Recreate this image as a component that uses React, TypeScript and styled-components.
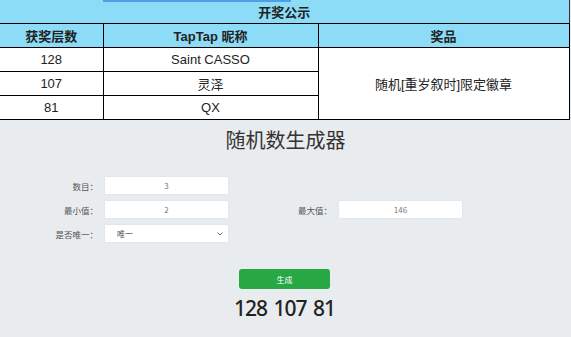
import React from "react";
import styled, { createGlobalStyle } from "styled-components";

const GlobalStyle = createGlobalStyle`
  html, body {
    margin: 0;
    padding: 0;
    background: #e9ecef;
    font-family: "Liberation Sans", "Noto Sans CJK SC", sans-serif;
  }
`;

const Page = styled.div`
  width: 571px;
  height: 337px;
  overflow: hidden;
  background: #e9ecef;
`;

const Table = styled.table`
  border-collapse: collapse;
  width: 569px;
  background: #fff;
  font-size: 13px;
  color: #222;
  table-layout: fixed;
`;

const Col = styled.col<{ $w: number }>`
  width: ${(p) => p.$w}px;
`;

const TitleCell = styled.th`
  position: relative;
  height: 23px;
  padding: 0;
  background: #8cdcf8;
  border-right: 1px solid #333;
  border-bottom: 1px solid #000;
  font-size: 13px;
  font-weight: bold;
  color: #222;

  &::before {
    content: "";
    position: absolute;
    left: 103px;
    top: 0;
    width: 188px;
    height: 2px;
    background: #4f9fe4;
  }
`;

const HeadCell = styled.th`
  height: 23px;
  padding: 0;
  background: #8cdcf8;
  border: 1px solid #000;
  font-weight: bold;
  &:first-child {
    border-left: none;
  }
`;

const Cell = styled.td`
  height: 23px;
  padding: 0;
  text-align: center;
  border: 1px solid #000;
  &:first-child {
    border-left: none;
  }
`;

const Generator = styled.section`
  padding-top: 6px;
  font-family: "Noto Sans CJK SC", "Noto Sans", sans-serif;
`;

const Title = styled.h1`
  margin: 0;
  text-align: center;
  font-size: 20px;
  font-weight: 400;
  line-height: 28px;
  color: #333;
`;

const Form = styled.div`
  margin-top: 22px;
  display: grid;
  grid-template-columns: 104px 125px 109px 125px;
  grid-auto-rows: 19px;
  row-gap: 5px;
  align-items: center;
`;

const Label = styled.label<{ $col?: number }>`
  grid-column: ${(p) => p.$col ?? 1};
  text-align: right;
  padding-right: 6px;
  font-size: 8.5px;
  color: #555;
`;

const Input = styled.div<{ $col?: number }>`
  grid-column: ${(p) => p.$col ?? 2};
  height: 19px;
  box-sizing: border-box;
  background: #fff;
  border: 1px solid #e4e7ea;
  border-radius: 2px;
  font-size: 8px;
  color: #777;
  display: flex;
  align-items: center;
  justify-content: center;
`;

const Select = styled(Input)`
  justify-content: space-between;
  padding: 0 5px 0 12px;
  color: #555;
`;

const Chevron = styled.svg`
  width: 6px;
  height: 4px;
`;

const Actions = styled.div`
  margin-top: 26px;
  display: flex;
  flex-direction: column;
  align-items: center;
  padding-right: 2px;
`;

const Button = styled.button`
  width: 91px;
  height: 20px;
  border: none;
  border-radius: 3px;
  background: #28a745;
  color: #fff;
  font-family: inherit;
  font-size: 8px;
  padding: 0;
`;

const Result = styled.div`
  margin-top: 6px;
  font-family: "Noto Sans", sans-serif;
  font-size: 21px;
  font-weight: 500;
  letter-spacing: -1px;
  word-spacing: 2px;
  line-height: 26px;
  color: #222;
`;

const rows = [
  { floor: "128", name: "Saint CASSO" },
  { floor: "107", name: "灵泽" },
  { floor: "81", name: "QX" },
];

export default function App() {
  return (
    <Page>
      <GlobalStyle />
      <Table>
        <colgroup>
          <Col $w={103} />
          <Col $w={215} />
          <Col $w={251} />
        </colgroup>
        <thead>
          <tr>
            <TitleCell colSpan={3}>开奖公示</TitleCell>
          </tr>
          <tr>
            <HeadCell>获奖层数</HeadCell>
            <HeadCell>TapTap 昵称</HeadCell>
            <HeadCell>奖品</HeadCell>
          </tr>
        </thead>
        <tbody>
          {rows.map((r, i) => (
            <tr key={r.floor}>
              <Cell>{r.floor}</Cell>
              <Cell>{r.name}</Cell>
              {i === 0 && <Cell rowSpan={3}>随机[重岁叙时]限定徽章</Cell>}
            </tr>
          ))}
        </tbody>
      </Table>
      <Generator>
        <Title>随机数生成器</Title>
        <Form>
          <Label>数目：</Label>
          <Input>3</Input>
          <Label>最小值：</Label>
          <Input>2</Input>
          <Label $col={3}>最大值：</Label>
          <Input $col={4}>146</Input>
          <Label>是否唯一：</Label>
          <Select>
            <span>唯一</span>
            <Chevron viewBox="0 0 6 4">
              <path d="M0.5 0.5 L3 3 L5.5 0.5" fill="none" stroke="#666" strokeWidth="1" />
            </Chevron>
          </Select>
        </Form>
        <Actions>
          <Button>生成</Button>
          <Result>128 107 81</Result>
        </Actions>
      </Generator>
    </Page>
  );
}
